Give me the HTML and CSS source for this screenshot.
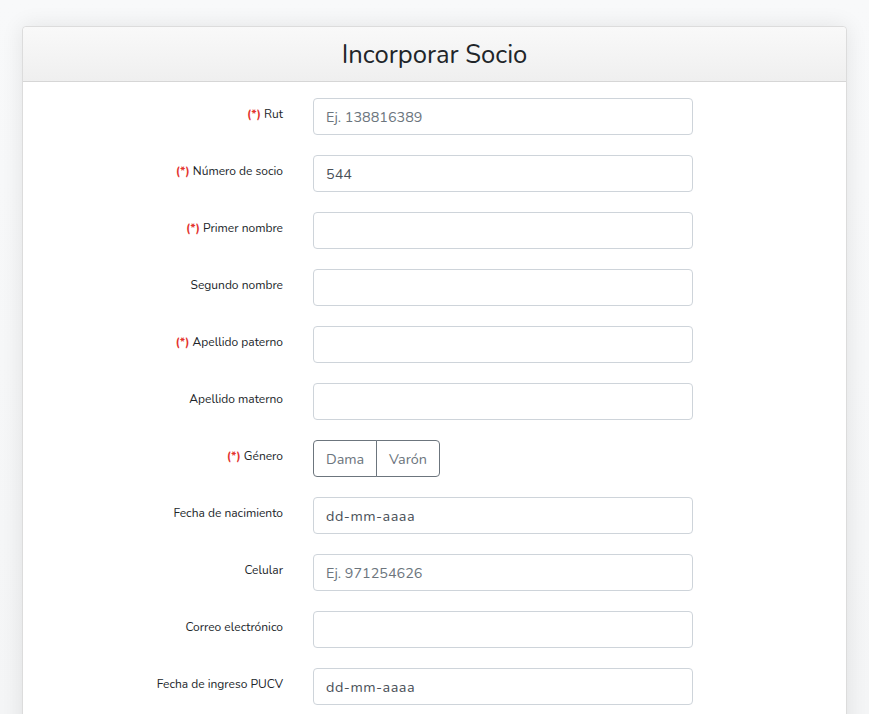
FILE: index.html
```html
<!DOCTYPE html>
<html lang="es">
<head>
<meta charset="utf-8">
<title>Incorporar Socio</title>
<link rel="stylesheet" href="styles.css">
</head>
<body>
<div class="page">
  <div class="card">
    <div class="card-header"><h1>Incorporar Socio</h1></div>
    <form class="card-body">
      <div class="row"><label><span class="req">(*)</span> Rut</label><input class="ctl" type="text" placeholder="Ej. 138816389"></div>
      <div class="row"><label><span class="req">(*)</span> Número de socio</label><input class="ctl" type="text" value="544"></div>
      <div class="row"><label><span class="req">(*)</span> Primer nombre</label><input class="ctl" type="text"></div>
      <div class="row"><label>Segundo nombre</label><input class="ctl" type="text"></div>
      <div class="row"><label><span class="req">(*)</span> Apellido paterno</label><input class="ctl" type="text"></div>
      <div class="row"><label>Apellido materno</label><input class="ctl" type="text"></div>
      <div class="row"><label><span class="req">(*)</span> Género</label>
        <div class="btn-group"><button type="button" class="btn">Dama</button><button type="button" class="btn">Varón</button></div>
      </div>
      <div class="row"><label>Fecha de nacimiento</label><input class="ctl date" type="text" value="dd-mm-aaaa"></div>
      <div class="row"><label>Celular</label><input class="ctl" type="text" placeholder="Ej. 971254626"></div>
      <div class="row"><label>Correo electrónico</label><input class="ctl" type="text"></div>
      <div class="row"><label>Fecha de ingreso PUCV</label><input class="ctl date" type="text" value="dd-mm-aaaa"></div>
    </form>
  </div>
</div>
</body>
</html>
```

FILE: styles.css
```css
* { box-sizing: border-box; }
html, body { margin: 0; height: 100%; }
body {
  background: linear-gradient(#f8f9fa, #f4f5f6);
  font-family: "Nunito", "Open Sans", "Noto Sans", sans-serif;
  color: #212529;
  overflow: hidden;
}
.page { padding: 26px 22px 0 22px; }
.card {
  background: #fff;
  border: 1px solid #dcdcdc;
  border-radius: 4px;
  box-shadow: 0 0 22px rgba(0,0,0,0.09);
  min-height: 720px;
}
.card-header {
  height: 55px;
  background: linear-gradient(#f9f9f9, #efefef);
  border-bottom: 1px solid #d6d6d6;
  border-radius: 4px 4px 0 0;
  display: flex;
  align-items: center;
  justify-content: center;
}
.card-header h1 {
  margin: 0;
  font-weight: 400;
  font-size: 25.6px;
  color: #212529;
}
.card-body { padding-top: 16px; }
.row {
  display: grid;
  grid-template-columns: 290px 380px;
  margin-bottom: 20px;
}
.row label {
  text-align: right;
  padding-right: 30px;
  padding-top: 7px;
  font-size: 12px;
  line-height: 18px;
  color: #212529;
}
.req { color: #e3342f; font-weight: 700; }
.ctl {
  height: 37px;
  width: 380px;
  border: 1px solid #ced4da;
  border-radius: 4px;
  padding: 0 12px;
  font-family: inherit;
  font-size: 14.4px;
  color: #495057;
  background: #fff;
  outline: none;
}
.ctl::placeholder { color: #6c757d; }
.date { letter-spacing: 0.5px; }
.btn-group { display: flex; }
.btn {
  height: 37px;
  padding: 0 12px;
  font-family: inherit;
  font-size: 14.4px;
  color: #6c757d;
  background: #fff;
  border: 1px solid #6c757d;
  cursor: pointer;
}
.btn:first-child { border-radius: 4px 0 0 4px; width: 64px; }
.btn:last-child { border-radius: 0 4px 4px 0; margin-left: -1px; width: 64px; }
```
